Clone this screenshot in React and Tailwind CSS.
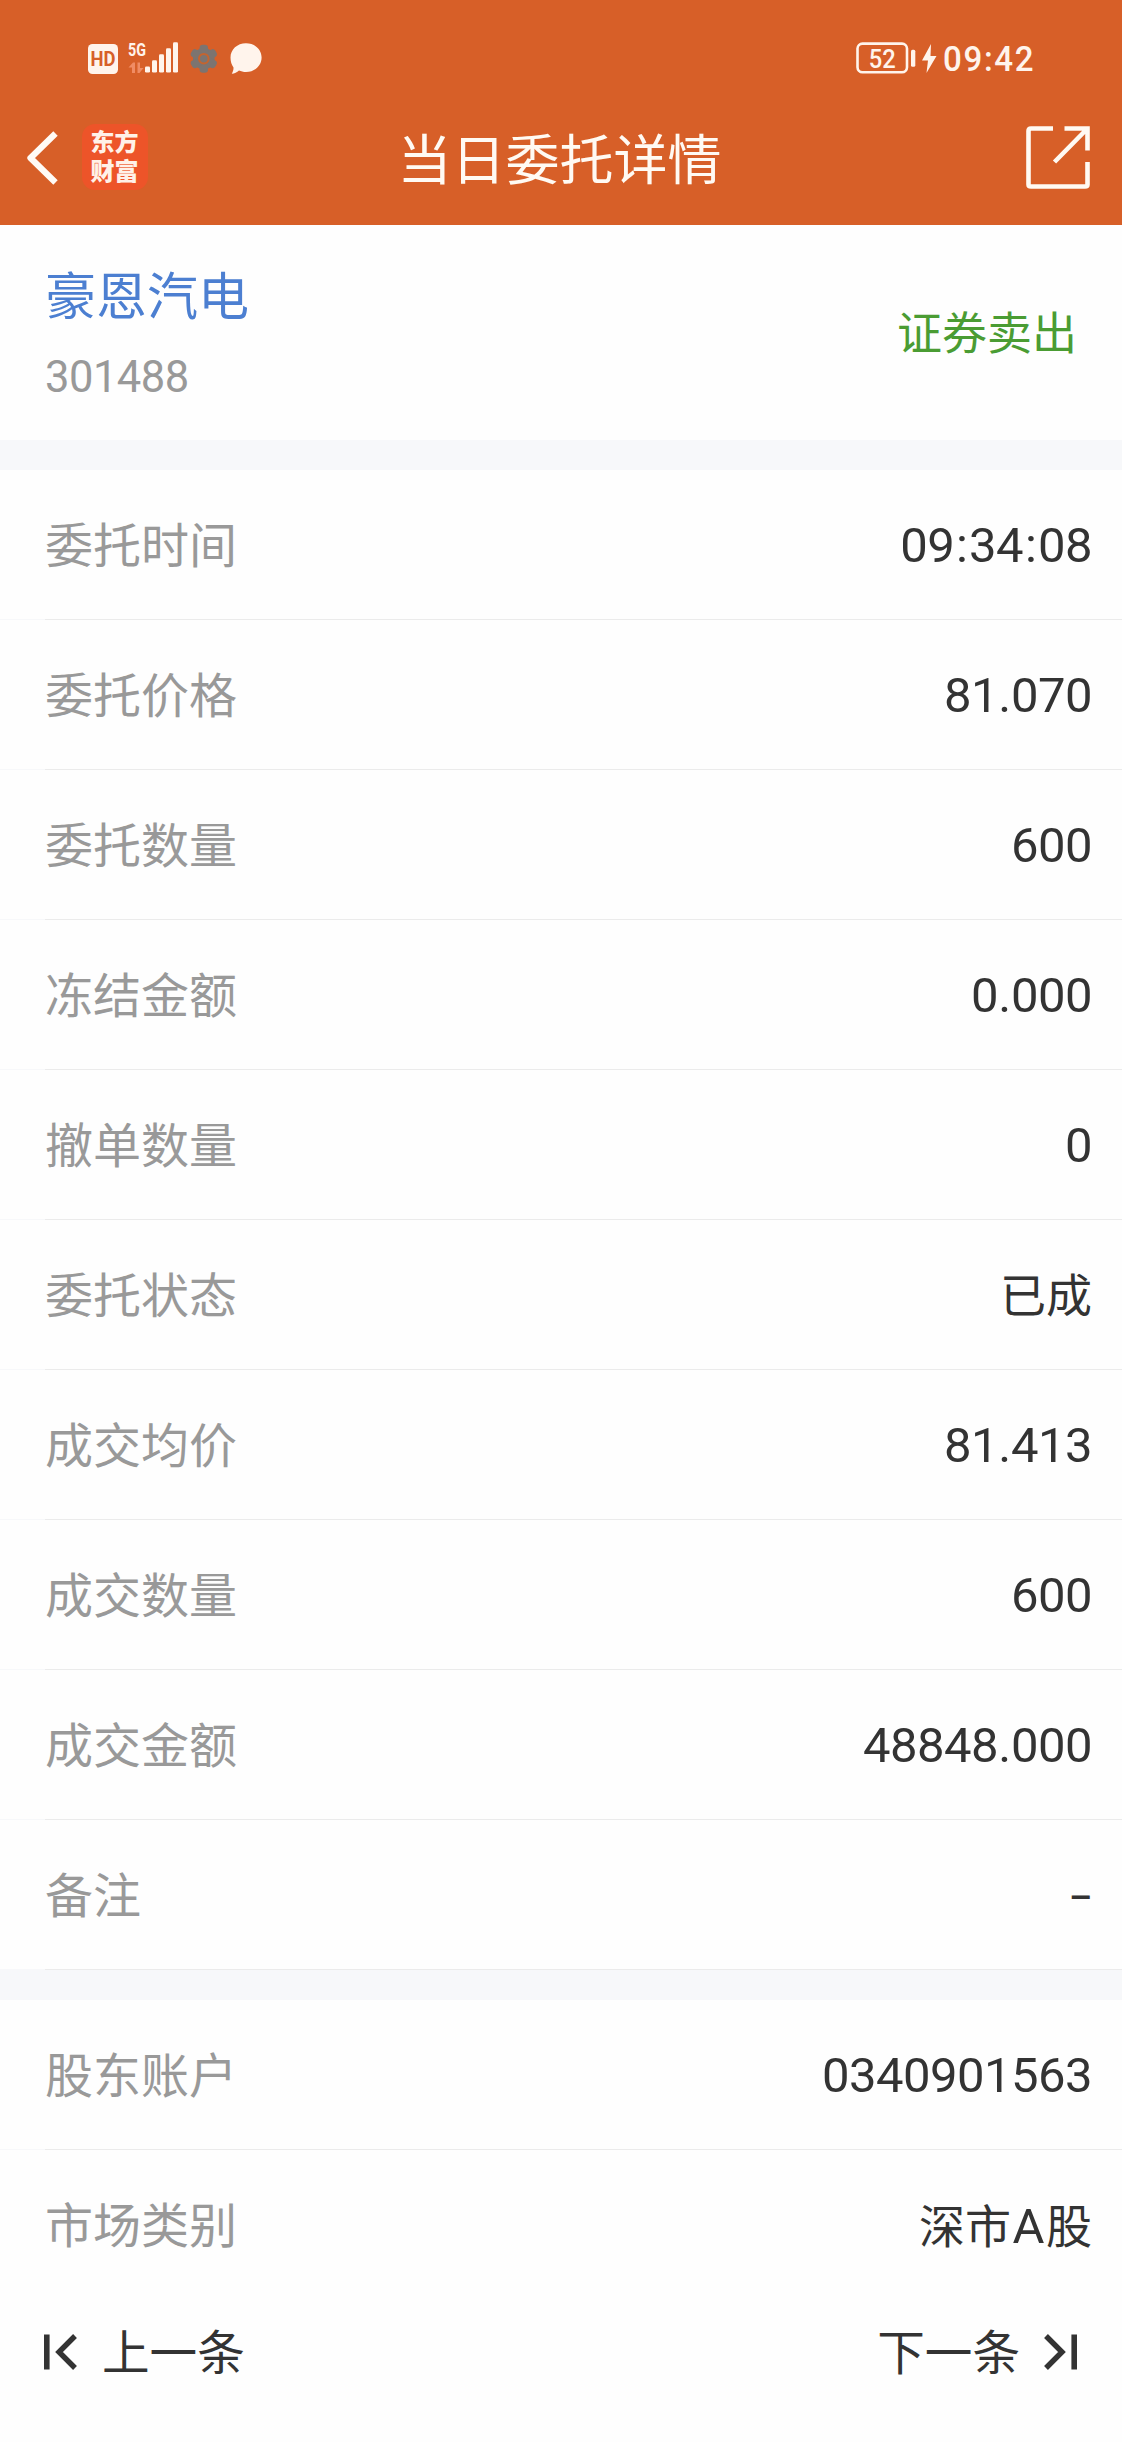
const orderRows = [
  ["委托时间", "09:34:08"],
  ["委托价格", "81.070"],
  ["委托数量", "600"],
  ["冻结金额", "0.000"],
  ["撤单数量", "0"],
  ["委托状态", "已成"],
  ["成交均价", "81.413"],
  ["成交数量", "600"],
  ["成交金额", "48848.000"],
  ["备注", "–"],
];

const accountRows = [
  ["股东账户", "0340901563"],
  ["市场类别", "深市A股"],
];

function Value({ text }) {
  if (/[\u4e00-\u9fff]/.test(text)) {
    return (
      <span className="pb-[5px] text-[46px] leading-[46px] font-['Noto_Sans_CJK_SC',sans-serif]">
        {text.split(/([A-Z]+)/).map((part, i) =>
          /[A-Z]/.test(part) ? (
            <span key={i} className="px-[1.5px] font-[Roboto,sans-serif] text-[49px] leading-[0]">{part}</span>
          ) : (
            part
          )
        )}
      </span>
    );
  }
  if (text === "–") {
    return <span className="pt-[7px] font-[Roboto,sans-serif] font-medium text-[36px] leading-none">{text}</span>;
  }
  return (
    <span className="pt-[1px] font-[Roboto,sans-serif] text-[49px] leading-none tracking-[-0.55px]">
      {text.split(/([:.])/).map((part, i) => {
        if (part === ":") return <span key={i} className="px-[1.8px]">{part}</span>;
        if (part === ".") return <span key={i} className="px-[0.4px]">{part}</span>;
        return part;
      })}
    </span>
  );
}

function Row({ label, value, last }) {
  return (
    <div className="h-[150px] flex flex-col">
      <div className="flex-1 flex items-center justify-between pl-[45px] pr-[30px]">
        <span className="pb-[6px] text-[48px] leading-none text-[#999999]">{label}</span>
        <Value text={value} />
      </div>
      {!last && (
        <div className="h-px flex">
          <div className="w-[45px] bg-[#f7f8fa]" />
          <div className="flex-1 bg-[#ebebeb]" />
        </div>
      )}
    </div>
  );
}

function StatusBar() {
  return (
    <div className="h-[92px] flex items-start justify-between pt-[38px] pl-[88px] pr-[84px] text-[#fff4ec]">
      <svg width="176" height="42" viewBox="88 38 176 42" fill="currentColor">
        <rect x="88" y="44" width="30" height="30" rx="4.5" />
        <text x="103" y="65.8" textAnchor="middle" textLength="25" lengthAdjust="spacingAndGlyphs" fontFamily="Roboto" fontWeight="700" fontSize="19.5" fill="#d75f28">HD</text>
        <text x="128" y="55.8" textLength="18" lengthAdjust="spacingAndGlyphs" fontFamily="Roboto" fontWeight="700" fontSize="18.5">5G</text>
        <g fill="#f08c64">
          <path d="M128.5 67.5L133 62.5H135V73H132V67.5Z" />
          <path d="M137.5 62.5H140V68H143.5L139.5 73H137.5Z" />
        </g>
        <rect x="145" y="66.5" width="5" height="6" rx="1.3" />
        <rect x="152" y="60.3" width="5" height="12.2" rx="1.3" />
        <rect x="159" y="54.3" width="5" height="18.2" rx="1.3" />
        <rect x="166" y="48.3" width="5" height="24.2" rx="1.3" />
        <rect x="173" y="42.3" width="5" height="30.2" rx="1.3" />
        <g transform="translate(203.8 58.7)" fill="#7c7470">
          <circle r="10.8" />
          <rect x="-4.2" y="-14" width="8.4" height="28" rx="3.2" />
          <rect x="-4.2" y="-14" width="8.4" height="28" rx="3.2" transform="rotate(60)" />
          <rect x="-4.2" y="-14" width="8.4" height="28" rx="3.2" transform="rotate(120)" />
          <circle r="4.8" fill="none" stroke="#c4642f" strokeWidth="2" />
        </g>
        <path d="M246 43.3C254.8 43.3 261.6 49.5 261.6 57.6S254.8 72 246 72C243.4 72 241 71.4 239 70.5C237 72.5 234.5 73.7 231.8 73.7C233 71.5 233.6 69.5 233.5 67.5C231.5 64.8 230.5 61.5 230.5 57.6C230.5 49.5 237.2 43.3 246 43.3Z" />
      </svg>
      <svg width="182" height="42" viewBox="856 38 182 42" fill="currentColor">
        <rect x="857.5" y="43.6" width="49.5" height="28.6" rx="5" fill="none" stroke="currentColor" strokeWidth="2.6" />
        <text x="882.3" y="68" textAnchor="middle" textLength="27" lengthAdjust="spacingAndGlyphs" fontFamily="Roboto" fontWeight="500" fontSize="26">52</text>
        <rect x="911" y="49.8" width="4.3" height="17" rx="1.5" />
        <path d="M931 44L922 60.5H928L926.5 73L936.5 56H930.5Z" />
        <text transform="translate(943 71) scale(0.92 1)" textLength="98.5" lengthAdjust="spacing" fontFamily="Roboto" fontWeight="500" fontSize="36">09:42</text>
      </svg>
    </div>
  );
}

function TitleBar() {
  return (
    <div className="h-[133px] grid grid-cols-[1fr_auto_1fr] items-start pl-[29px] pr-[32px]">
      <div className="flex items-start pt-[32px] -ml-[3px]">
        <svg className="mt-[7px]" width="34" height="56" viewBox="26 131 34 56" fill="none" stroke="#fffaf5" strokeWidth="6.3">
          <path d="M55.5 133.5L30.5 158L55.5 182.5" strokeLinejoin="round" />
        </svg>
        <div className="ml-[22px] size-[66px] rounded-[13px] bg-[#ed5429] flex flex-col items-center pt-[3px] pr-[1px] text-[24px] leading-[28.5px] font-black text-[#fff1e8]">
          <div>东方</div>
          <div>财富</div>
        </div>
      </div>
      <h1 className="pt-[36px] text-[54px] leading-[57px] text-[#fffaf3] font-normal">当日委托详情</h1>
      <svg className="justify-self-end mt-[33px]" width="64" height="64" viewBox="0 0 64 64" fill="none" stroke="#fffaf3" strokeWidth="4.6">
        <path d="M27 3.5H5Q2.5 3.5 2.5 6V59.5Q2.5 61.5 5 61.5H59Q61.5 61.5 61.5 59.5V37" />
        <path d="M38.5 3.5H61.5V25.5M60.5 4.5L28.5 37" />
      </svg>
    </div>
  );
}

export default function App() {
  return (
    <div className="w-[1122px] h-[2442px] flex flex-col bg-[#fefefe] text-[#333333] font-['Noto_Sans_CJK_SC',sans-serif] overflow-hidden">
      <header className="h-[225px] bg-[#d75f28]">
        <StatusBar />
        <TitleBar />
      </header>

      <section className="h-[215px] flex items-center justify-between pl-[45px] pr-[45px]">
        <div className="h-full flex flex-col">
          <span className="mt-[42px] text-[51px] leading-[52px] text-[#4c7fd1]">豪恩汽电</span>
          <span className="mt-[37px] font-[Roboto,sans-serif] text-[43.5px] leading-[44px] tracking-[-0.5px] text-[#999999]">301488</span>
        </div>
        <span className="pb-[5px] text-[45px] leading-none text-[#4a9c33]">证券卖出</span>
      </section>

      <div className="h-[30px] bg-[#f7f8fa]" />

      <section>
        {orderRows.map(([label, value]) => (
          <Row key={label} label={label} value={value} />
        ))}
      </section>

      <div className="h-[30px] bg-[#f7f8fa]" />

      <section>
        {accountRows.map(([label, value], i) => (
          <Row key={label} label={label} value={value} last={i === 1} />
        ))}
      </section>

      <footer className="flex items-start justify-between pl-[43px] pr-[44px] pt-[25px] text-[47.6px] leading-[50px]">
        <div className="flex items-start">
          <svg className="mt-[9px] mr-[24px]" width="35" height="36" viewBox="0 0 35 36" fill="none" stroke="currentColor">
            <path d="M3.8 .5V35.5" strokeWidth="5.6" />
            <path d="M32 2L16 18L32 34" strokeWidth="5.4" />
          </svg>
          <span>上一条</span>
        </div>
        <div className="flex items-start">
          <span>下一条</span>
          <svg className="mt-[9px] ml-[23px]" width="35" height="36" viewBox="0 0 35 36" fill="none" stroke="currentColor">
            <path d="M31.2 .5V35.5" strokeWidth="5.6" />
            <path d="M3 2L19 18L3 34" strokeWidth="5.4" />
          </svg>
        </div>
      </footer>
    </div>
  );
}
